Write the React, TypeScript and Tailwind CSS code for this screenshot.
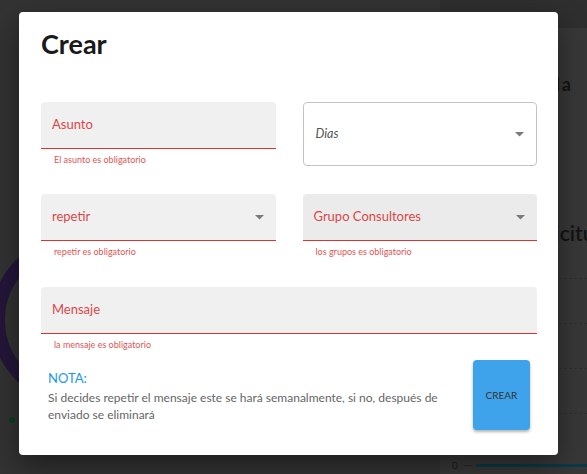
import React from 'react';

const font = "font-['Lato','Noto_Sans',sans-serif]";

function Caret() {
  return (
    <svg width="9" height="5" viewBox="0 0 9 5" className="shrink-0">
      <path d="M0 0h9L4.5 4.5z" fill="#7a7a7a" />
    </svg>
  );
}

function FilledField({
  label,
  helper,
  select = false,
  hover = false,
}: {
  label: string;
  helper: string;
  select?: boolean;
  hover?: boolean;
}) {
  return (
    <div className="flex flex-col">
      <div
        className={`flex h-[47px] items-center justify-between rounded-t-[4px] border-b-[1.5px] border-[#d83434] pl-[11px] pr-[12px] ${
          hover ? 'bg-[#ebebeb]' : 'bg-[#f0f0f0]'
        }`}
      >
        <span className="text-[13px] text-[#d94848]">{label}</span>
        {select && <Caret />}
      </div>
      <span className="mt-[5px] pl-[13px] text-[9px] leading-[12px] text-[#e05555]">{helper}</span>
    </div>
  );
}

function OutlinedSelect({ label }: { label: string }) {
  return (
    <div className="flex h-[64px] items-center justify-between rounded-[4px] border border-[#c4c4c4] pl-[12px] pr-[12px]">
      <span className="text-[12.5px] italic text-[#555]">{label}</span>
      <Caret />
    </div>
  );
}

function Backdrop() {
  return (
    <div className="flex h-full w-full">
      {/* left strip: donut chart peeking out */}
      <div className="flex w-[19px] shrink-0 flex-col overflow-hidden">
        <svg width="19" height="170" viewBox="0 0 19 170" className="mt-[236px] shrink-0">
          <circle cx="75" cy="84" r="77" fill="none" stroke="#24163a" strokeWidth="14" />
        </svg>
        <span className="ml-[9px] mt-[11px] h-[6px] w-[6px] rounded-full bg-[#0d3d1f]" />
      </div>
      <div className="flex-1" />
      {/* right column: dashboard headings and chart lines */}
      <div className="flex w-[147px] shrink-0 flex-col overflow-hidden">
        <div className="h-[28px] bg-[#2f2f2f]" />
        <div className="flex flex-1 flex-col bg-[#383838]">
          <div className="mt-[46px] flex justify-end overflow-hidden pr-[14px]">
            <span className="whitespace-nowrap text-[18px] font-bold leading-[20px] tracking-[2px] text-[#141414]">
              Agenda
            </span>
          </div>
          <div className="mt-[126px] whitespace-nowrap pl-[86px] text-[21px] font-semibold leading-[26px] text-[#141414]">
            Solicitudes
          </div>
          <div className="mt-[32px] flex flex-col gap-[44px]">
            <div className="border-t border-dashed border-[#303030]" />
            <div className="border-t border-dashed border-[#303030]" />
            <div className="border-t border-dashed border-[#303030]" />
            <div className="border-t border-dashed border-[#303030]" />
          </div>
          <div className="mt-auto mb-[3px] flex items-center">
            <span className="ml-[12px] text-[10px] leading-[12px] text-[#1c1c1c]">0</span>
            <span className="ml-[6px] h-px w-[8px] bg-[#2a2a2a]" />
            <span className="ml-[4px] h-[3px] flex-1 bg-[#0b3a47]" />
          </div>
        </div>
      </div>
    </div>
  );
}

export default function App() {
  return (
    <div className={`relative h-[474px] w-[587px] overflow-hidden bg-[#333333] ${font}`}>
      <Backdrop />

      {/* modal */}
      <div className="absolute inset-0 pl-[19px] pt-[12px]">
        <div className="flex h-[443px] w-[539px] flex-col rounded-[4px] bg-white pl-[22px] pr-[21px] pt-[15px] shadow-[0_10px_30px_rgba(0,0,0,0.45)]">
          <h2 className="text-[27px] font-bold leading-[34px] text-[#1a1a1a]">Crear</h2>

          <div className="mt-[41px] grid grid-cols-2 gap-x-[27px]">
            <FilledField label="Asunto" helper="El asunto es obligatorio" />
            <OutlinedSelect label="Dias" />
          </div>

          <div className="mt-[28px] grid grid-cols-2 gap-x-[27px]">
            <FilledField label="repetir" helper="repetir es obligatorio" select />
            <FilledField label="Grupo Consultores" helper="los grupos es obligatorio" select hover />
          </div>

          <div className="mt-[29px]">
            <FilledField label="Mensaje" helper="la mensaje es obligatorio" />
          </div>

          <div className="mt-[9px] flex items-start justify-between px-[7px]">
            <div className="mt-[10px] flex w-[400px] flex-col">
              <span className="text-[13px] leading-[16px] text-[#2196f3]">NOTA:</span>
              <p className="mt-[3px] text-[12px] leading-[17px] text-[#666]">
                Si decides repetir el mensaje este se hará semanalmente, si no, después de enviado se eliminará
              </p>
            </div>
            <button className="flex h-[70px] w-[57px] items-center justify-center rounded-[4px] bg-[#3fa3ec] text-[10px] text-[#333] shadow-[0_2px_3px_rgba(0,0,0,0.3)]">
              CREAR
            </button>
          </div>
        </div>
      </div>
    </div>
  );
}
